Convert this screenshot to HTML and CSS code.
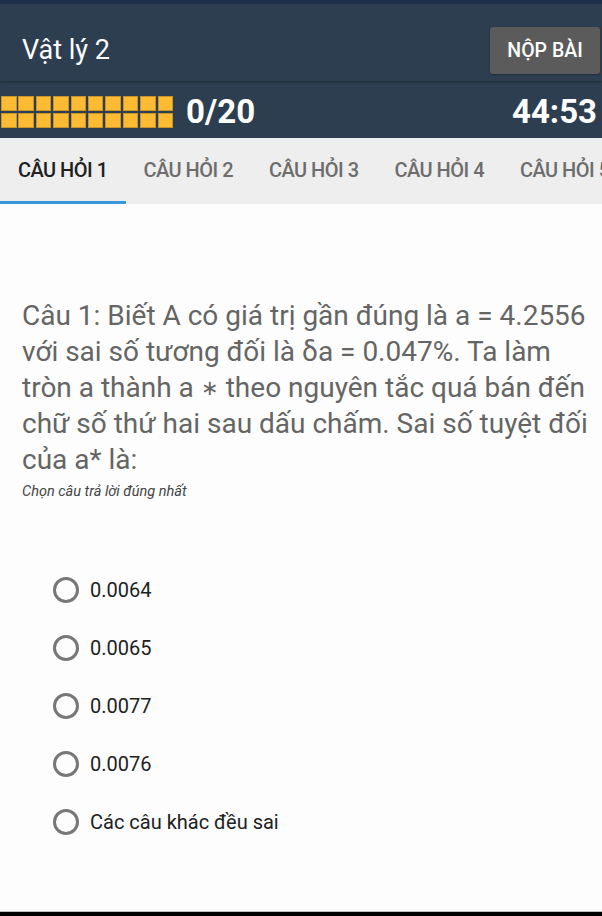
FILE: index.html
```html
<!DOCTYPE html>
<html lang="vi">
<head>
<meta charset="utf-8">
<title>Vật lý 2</title>
<link rel="stylesheet" href="styles.css">
</head>
<body>
<div class="app">
  <div class="statusbar"></div>
  <header class="topbar">
    <div class="title">Vật lý 2</div>
    <button class="submit">NỘP BÀI</button>
  </header>
  <div class="progressbar">
    <div class="grid">
      <span></span><span></span><span></span><span></span><span></span><span></span><span></span><span></span><span></span><span></span>
      <span></span><span></span><span></span><span></span><span></span><span></span><span></span><span></span><span></span><span></span>
    </div>
    <div class="score">0/20</div>
    <div class="timer">44:53</div>
  </div>
  <nav class="tabs">
    <div class="tab active">CÂU HỎI 1</div>
    <div class="tab">CÂU HỎI 2</div>
    <div class="tab">CÂU HỎI 3</div>
    <div class="tab">CÂU HỎI 4</div>
    <div class="tab">CÂU HỎI 5</div>
  </nav>
  <main class="content">
    <p class="question">Câu 1: Biết A có giá trị gần đúng là a = 4.2556<br>với sai số tương đối là δa = 0.047%. Ta làm<br>tròn a thành a <span class="op">∗</span> theo nguyên tắc quá bán đến<br>chữ số thứ hai sau dấu chấm. Sai số tuyệt đối<br>của a* là:</p>
    <p class="hint">Chọn câu trả lời đúng nhất</p>
    <ul class="options">
      <li class="option"><span class="radio"></span><span>0.0064</span></li>
      <li class="option"><span class="radio"></span><span>0.0065</span></li>
      <li class="option"><span class="radio"></span><span>0.0077</span></li>
      <li class="option"><span class="radio"></span><span>0.0076</span></li>
      <li class="option"><span class="radio"></span><span>Các câu khác đều sai</span></li>
    </ul>
  </main>
  <div class="navbar"></div>
</div>
</body>
</html>
```

FILE: styles.css
```css
* { box-sizing: border-box; }
html, body { margin: 0; padding: 0; }
body {
  font-family: Roboto, "Noto Sans", "Liberation Sans", sans-serif;
  background: #fdfdfd;
  width: 602px;
  height: 916px;
  overflow: hidden;
}
.app {
  display: flex;
  flex-direction: column;
  height: 916px;
}
.statusbar {
  height: 4px;
  background: #1d3049;
}
.topbar {
  height: 77px;
  background: #2d3e50;
  display: flex;
  align-items: center;
  justify-content: space-between;
  padding: 15px 2px 0 22px;
  box-shadow: 0 1px 2px rgba(0,0,0,0.35);
  position: relative;
  z-index: 1;
}
.title {
  color: #ffffff;
  font-size: 27px;
  font-weight: 400;
}
.submit {
  width: 110px;
  height: 47px;
  background: #5b5b5b;
  border: none;
  border-radius: 3px;
  color: #ffffff;
  font-family: inherit;
  font-size: 19.5px;
  font-weight: 500;
  box-shadow: 0 1px 2px rgba(0,0,0,0.3);
}
.progressbar {
  height: 57px;
  background: #2d3e50;
  display: flex;
  align-items: center;
  padding: 0 5px 0 1px;
}
.grid {
  display: grid;
  grid-template-columns: repeat(10, 15.5px);
  grid-auto-rows: 15px;
  gap: 2px 1.9px;
  margin-top: 4px;
}
.grid span {
  background: #fcbb33;
  box-shadow: inset 0 0 0 1px #c8942c;
}
.score {
  margin-left: 13px;
  color: #ffffff;
  font-size: 33px;
  font-weight: 700;
  margin-top: 3px;
}
.timer {
  margin-left: auto;
  color: #ffffff;
  font-size: 33px;
  font-weight: 700;
  margin-top: 3px;
}
.tabs {
  height: 66px;
  background: #eeeeee;
  display: flex;
  overflow: hidden;
  flex-shrink: 0;
}
.tab {
  flex: 0 0 125.5px;
  display: flex;
  align-items: center;
  justify-content: center;
  padding-top: 1px;
  color: #6d6d6d;
  font-size: 20px;
  font-weight: 500;
  letter-spacing: -0.5px;
  white-space: nowrap;
  border-bottom: 3px solid transparent;
}
.tab.active {
  color: #212121;
  border-bottom-color: #3a97dd;
}
.content {
  flex: 1;
  padding: 94px 0 0 22px;
}
.question {
  margin: 0;
  color: #656565;
  font-size: 28px;
  line-height: 36px;
  white-space: nowrap;
}
.op {
  font-size: 0.75em;
  vertical-align: 2px;
}
.hint {
  margin: 5px 0 0 0;
  color: #444444;
  font-size: 14.5px;
  font-style: italic;
}
.options {
  list-style: none;
  margin: 77px 0 0 0;
  padding: 0 0 0 31px;
  display: flex;
  flex-direction: column;
  gap: 32px;
}
.option {
  display: flex;
  align-items: center;
  gap: 11px;
  height: 26px;
  color: #212121;
  font-size: 20px;
}
.radio {
  width: 26px;
  height: 26px;
  border-radius: 50%;
  border: 3px solid #777777;
  flex-shrink: 0;
}
.navbar {
  height: 5px;
  background: #000000;
  border-top: 1px solid #bdbdbd;
}
```
